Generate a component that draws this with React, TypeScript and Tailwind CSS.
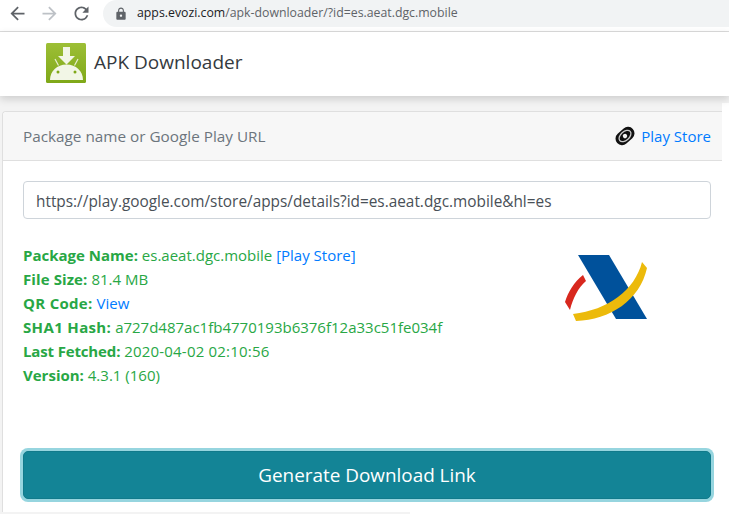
import React from 'react';
import { MdArrowBack, MdArrowForward, MdRefresh, MdLock } from 'react-icons/md';

const AndroidLogo = () => (
  <svg width="40" height="40" viewBox="0 0 40 40" className="shrink-0">
    <defs>
      <linearGradient id="apkBg" x1="0" y1="0" x2="0" y2="1">
        <stop offset="0" stopColor="#9dbf36" />
        <stop offset="1" stopColor="#7fa818" />
      </linearGradient>
    </defs>
    <rect width="40" height="40" rx="1.5" fill="url(#apkBg)" />
    <path d="M17 4h7v9h5l-8.500 8.500L12 13h5z" fill="#f2f6e6" />
    <path d="M9 16l3.500 6.500M32 16l-3.500 6.500" stroke="#e8efd0" strokeWidth="1.200" />
    <path d="M4 37c0-9 7-15.500 16.500-15.500S37 28 37 37z" fill="#f2f6e6" />
    <circle cx="12" cy="29" r="1.500" fill="#7fa818" />
    <circle cx="29" cy="29" r="1.500" fill="#7fa818" />
  </svg>
);

const PlayStoreIcon = () => (
  <svg width="22" height="22" viewBox="0 0 22 22" className="shrink-0">
    <g transform="rotate(-42 11 11)">
      <rect x="0.500" y="4.500" width="21" height="13" rx="6.500" fill="#111" />
      <ellipse cx="11" cy="11" rx="7" ry="4.300" fill="none" stroke="#ccc" strokeWidth="1.300" />
      <circle cx="11" cy="11" r="2.200" fill="#f4f4f4" />
    </g>
  </svg>
);

const AeatLogo = () => (
  <svg width="90" height="75" viewBox="0 0 90 75" className="shrink-0">
    <path d="M18 5H49L87 69H56z" fill="#00519b" />
    <path d="M5 52L10 60C13 48 18 38 26 31L23 25C14 32 8 42 5 52z" fill="#d8281e" />
    <path d="M13 64L16 71C50 70 80 50 87 18L82 12C75 40 48 60 13 64z" fill="#ecba0b" />
  </svg>
);

const Field = ({ label, labelClass, children }: { label: string; labelClass?: string; children: React.ReactNode }) => (
  <div className="h-6 leading-6 whitespace-nowrap">
    <span className={`font-bold ${labelClass ?? ''}`}>{label}:</span> {children}
  </div>
);

export default function App() {
  return (
    <div className="w-[729px] h-[514px] overflow-hidden bg-[#f3f3f3] text-[#333a40] font-['Open_Sans','Noto_Sans',sans-serif]">
      {/* Browser bar */}
      <div className="h-8 flex border-b border-[#dcdcdc] bg-white">
        <div className="flex items-center pl-px w-[103px] h-[27px] shrink-0 text-[21px]">
          <span className="w-8 flex justify-center text-[#5f6368]"><MdArrowBack /></span>
          <span className="w-8 flex justify-center text-[#bdc1c6]"><MdArrowForward /></span>
          <span className="w-8 flex justify-center text-[#5f6368]"><MdRefresh /></span>
        </div>
        <div className="flex-1 h-[27px] rounded-l-full bg-[#f1f3f4] flex items-center pl-[11px] gap-[9px] text-[12.3px]">
          <MdLock className="text-[14px] text-[#5f6368]" />
          <span className="text-[#5f6368] whitespace-nowrap">
            <span className="text-[#202124]">apps.evozi.com</span>/apk-downloader/?id=es.aeat.dgc.mobile
          </span>
        </div>
      </div>

      {/* Navbar */}
      <div className="h-[64px] flex items-center pl-[46px] pb-[2px] gap-2 bg-white shadow-[0_3px_8px_rgba(0,0,0,0.16)] relative">
        <AndroidLogo />
        <span className="text-[19px] text-[#343a40] pb-[2px]">APK Downloader</span>
      </div>

      {/* Card */}
      <div className="flex h-[416px] pl-[2px]">
        <div className="flex-1 mt-[15px] border border-r-0 border-b-0 border-[#dfdfdf] rounded-tl-[4px] bg-white">
          <div className="h-[49px] flex items-center justify-between pl-5 pr-[11px] bg-[#f7f7f7] border-b border-[#dfdfdf] rounded-tl-[4px]">
            <span className="text-[15.3px] text-[#6c757d]">Package name or Google Play URL</span>
            <div className="flex items-center gap-[5px]">
              <PlayStoreIcon />
              <a className="text-[15px] text-[#007bff]">Play Store</a>
            </div>
          </div>

          <div className="pl-5 pr-[11px] pt-5">
            <div className="h-[38px] flex items-center px-3 pt-[3px] border border-[#ced4da] rounded-[4px] text-[15.36px] text-[#495057] whitespace-nowrap">
              https://play.google.com/store/apps/details?id=es.aeat.dgc.mobile&amp;hl=es
            </div>

            <div className="flex justify-between mt-6 h-[208px]">
              <div className="text-[15px] text-[#28a745]">
                <Field label="Package Name">
                  es.aeat.dgc.mobile <a className="text-[#007bff]">[Play Store]</a>
                </Field>
                <Field label="File Size" labelClass="tracking-[0.1px]">81.4 MB</Field>
                <Field label="QR Code" labelClass="tracking-[0.3px]">
                  <a className="text-[#007bff]">View</a>
                </Field>
                <Field label="SHA1 Hash" labelClass="tracking-[0.35px]">a727d487ac1fb4770193b6376f12a33c51fe034f</Field>
                <Field label="Last Fetched" labelClass="-tracking-[0.15px]">
                  <span className="tracking-[0.2px]">2020-04-02 02:10:56</span>
                </Field>
                <Field label="Version">4.3.1 (160)</Field>
              </div>
              <div className="pt-[7px] pr-[61px]">
                <AeatLogo />
              </div>
            </div>

            <button className="block w-full h-[48px] rounded-[5px] bg-[#138496] text-white text-[18.9px] shadow-[0_0_0_3px_rgba(23,162,184,0.45)] border border-[#117a8b]">
              Generate Download Link
            </button>
          </div>
        </div>
        <div className="w-[7px] mt-[7px] bg-white" />
      </div>

      {/* Bottom edge */}
      <div className="flex h-[2px]">
        <div className="w-[410px]" />
        <div className="flex-1 bg-white" />
      </div>
    </div>
  );
}
